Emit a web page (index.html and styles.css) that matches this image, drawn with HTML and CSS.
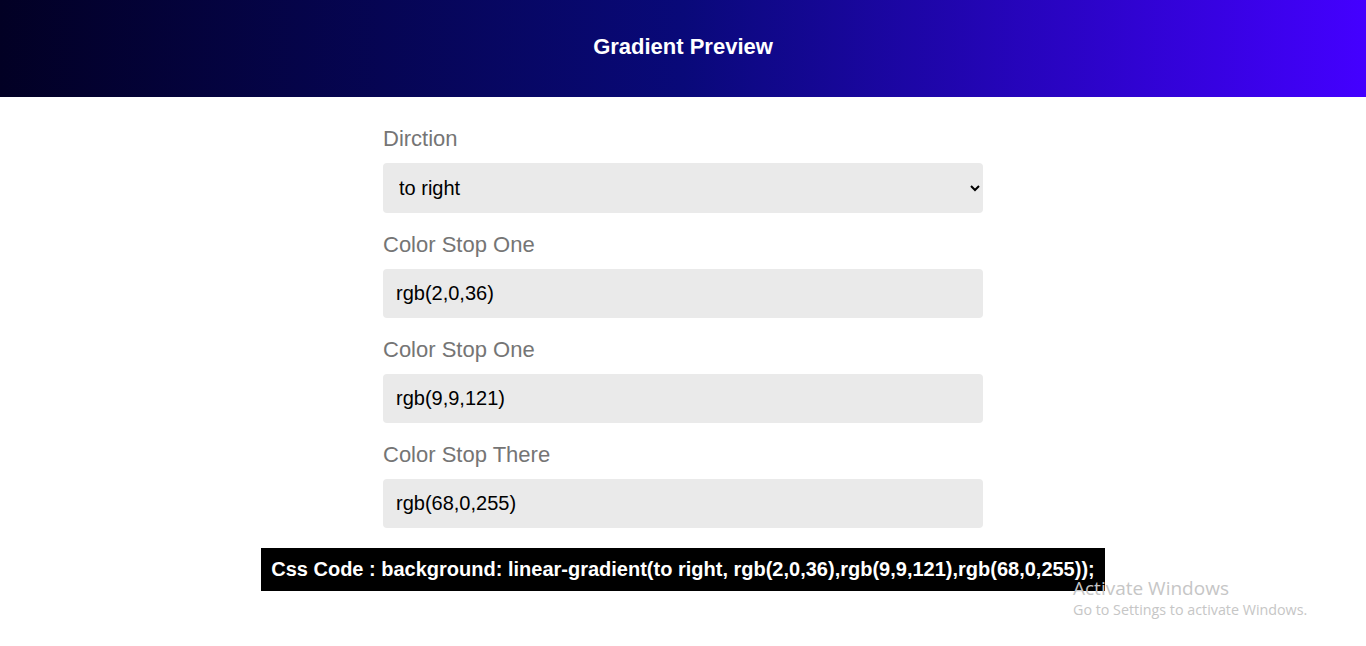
FILE: index.html
```html
<!DOCTYPE html>
<html>
<head>
<meta charset="utf-8">
<link rel="stylesheet" href="styles.css">
</head>
<body>
<header class="preview">
  <h1 class="title">Gradient Preview</h1>
</header>
<main class="form">
  <div class="field">
    <label class="label">Dirction</label>
    <select class="control select">
      <option>to right</option>
    </select>
  </div>
  <div class="field">
    <label class="label">Color Stop One</label>
    <input class="control" type="text" value="rgb(2,0,36)">
  </div>
  <div class="field">
    <label class="label">Color Stop One</label>
    <input class="control" type="text" value="rgb(9,9,121)">
  </div>
  <div class="field">
    <label class="label">Color Stop There</label>
    <input class="control" type="text" value="rgb(68,0,255)">
  </div>
</main>
<div class="code-wrap">
  <p class="code">Css Code : background: linear-gradient(to right, rgb(2,0,36),rgb(9,9,121),rgb(68,0,255));</p>
</div>
<div class="watermark">
  <div class="wm-title">Activate Windows</div>
  <div class="wm-sub">Go to Settings to activate Windows.</div>
</div>
</body>
</html>
```
FILE: styles.css
```css
html, body {
  margin: 0;
  padding: 0;
  background: #fff;
  font-family: "Liberation Sans", Arial, sans-serif;
}
.preview {
  height: 97px;
  display: flex;
  align-items: center;
  justify-content: center;
  background: linear-gradient(to right, rgb(2,0,36), rgb(9,9,121), rgb(68,0,255));
}
.title {
  margin: 0;
  color: #fff;
  font-size: 22px;
  font-weight: bold;
  line-height: 1;
  position: relative;
  top: -2px;
}
.form {
  width: 600px;
  margin: 0 auto;
  padding-top: 29px;
  display: flex;
  flex-direction: column;
  gap: 19px;
}
.field {
  display: flex;
  flex-direction: column;
  gap: 11px;
}
.label {
  font-size: 22px;
  line-height: 26px;
  color: #757575;
}
.control {
  box-sizing: border-box;
  width: 600px;
  height: 49px;
  border: none;
  border-radius: 4px;
  background: #eaeaea;
  font-family: "Liberation Sans", Arial, sans-serif;
  font-size: 20px;
  color: #000;
  padding: 0 13px;
  outline: none;
}
.select {
  height: 50px;
  padding: 0 10px 0 12px;
}
.code-wrap {
  display: flex;
  justify-content: center;
  margin-top: 20px;
}
.code {
  margin: 0;
  background: #000;
  color: #fff;
  font-size: 20px;
  font-weight: bold;
  line-height: 43px;
  padding: 0 10px;
  white-space: nowrap;
}
.watermark {
  position: absolute;
  left: 1073px;
  top: 576px;
  font-family: "Open Sans", "Noto Sans", sans-serif;
}
.wm-title {
  font-size: 19px;
  line-height: 24px;
  color: #c6c6c6;
}
.wm-sub {
  font-size: 14.3px;
  line-height: 20px;
  color: #c6c6c6;
}
```
